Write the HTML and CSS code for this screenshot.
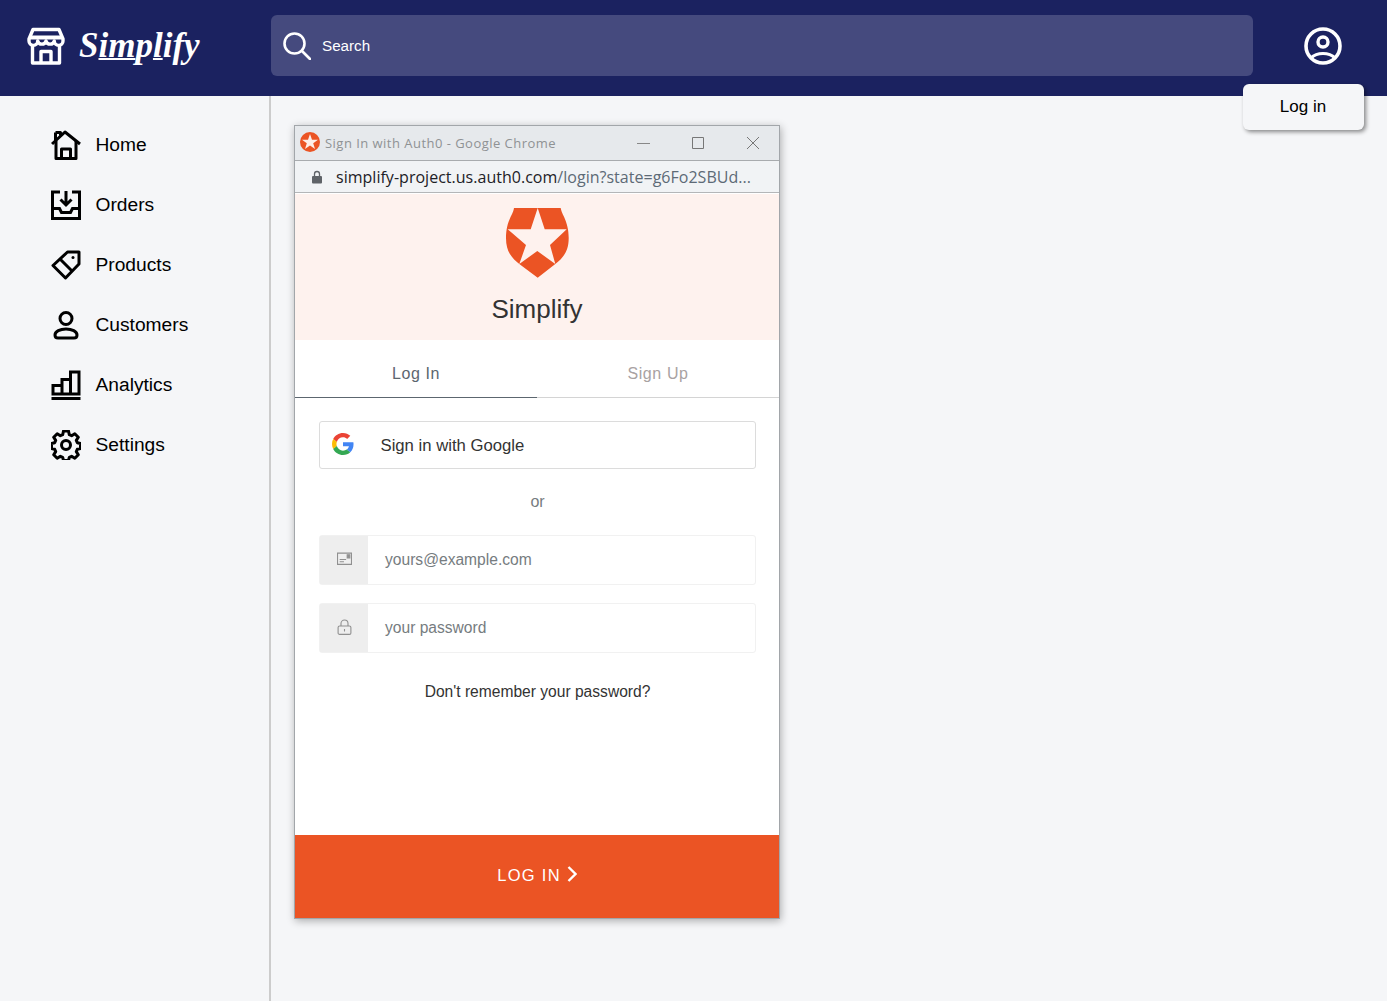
FILE: index.html
```html
<!DOCTYPE html>
<html>
<head>
  <title>Simplify</title>
  <link rel="stylesheet" href="styles.css">
</head>
<body>

  <!-- Header -->
  <header class="topbar">
    <div class="brand">
      <svg class="brand-icon" viewBox="0 0 38 38" fill="none" stroke="#fff" stroke-width="3.400" stroke-linejoin="round">
        <path d="M6 2.500h26l4 9.500v2a4.300 4.300 0 0 1-8.700 0 4.300 4.300 0 0 1-8.300 0 4.300 4.300 0 0 1-8.300 0 4.300 4.300 0 0 1-8.700 0v-2z"/>
        <path d="M2 10.500h34" stroke-width="4"/>
        <path d="M5.500 18v18h27V18"/>
        <path d="M14 36V24.500h10V36"/>
      </svg>
      <a href="#" class="brand-name">S<span class="brand-line">im</span>p<span class="brand-line">l</span>ify</a>
    </div>
    <div class="search">
      <svg class="search-icon" viewBox="0 0 28 28" fill="none" stroke="#fff" stroke-width="2.600" stroke-linecap="round">
        <circle cx="11.500" cy="11.500" r="10"/>
        <path d="M19 19l8 8"/>
      </svg>
      <span>Search</span>
    </div>
    <div class="account">
      <svg class="account-icon" viewBox="0 0 38 38" fill="none" stroke="#fff" stroke-width="3.600">
        <circle cx="19" cy="19" r="17"/>
        <circle cx="19" cy="15" r="5" stroke-width="3.400"/>
        <path d="M7 31c3-3 7-4.500 12-4.500s9 1.500 12 4.500" stroke-width="3.200"/>
      </svg>
    </div>
  </header>

  <button class="login-pop">Log in</button>

  <div class="page">
    <!-- Sidebar -->
    <nav class="sidebar">
      <a href="#" class="nav-item">
        <svg viewBox="0 0 30 30" fill="none" stroke="#000" stroke-width="3" stroke-linejoin="round">
          <path d="M1 14L14 2l15 12"/>
          <path d="M4.500 2.500h5v3"/>
          <path d="M4.500 2.500V11M5 11v17.500h20V11"/>
          <path d="M10.500 28.500V19h9v9.500"/>
        </svg>
        <span>Home</span>
      </a>
      <a href="#" class="nav-item">
        <svg viewBox="0 0 30 30" fill="none" stroke="#000" stroke-width="3" stroke-linejoin="miter">
          <path d="M9 2H1.500v26.500h27V2H21"/>
          <path d="M1.500 18.500h7l2 4h9l2-4h7"/>
          <path d="M15 1v13M9.500 9.500L15 15l5.500-5.500"/>
        </svg>
        <span>Orders</span>
      </a>
      <a href="#" class="nav-item">
        <svg viewBox="0 0 30 30" fill="none" stroke="#000" stroke-width="3" stroke-linejoin="round">
          <path d="M16.500 2H28v12L14.500 28 2 15.500z"/>
          <path d="M9 9l12.500 12.500"/>
          <circle cx="22" cy="7.500" r="1.500" fill="#000" stroke="none"/>
        </svg>
        <span>Products</span>
      </a>
      <a href="#" class="nav-item">
        <svg viewBox="0 0 30 30" fill="none" stroke="#000" stroke-width="3">
          <circle cx="15" cy="8.500" r="6"/>
          <path d="M4 25c0-3.500 5-6 11-6s11 2.500 11 6c0 2-1 3-3 3H7c-2 0-3-1-3-3z"/>
        </svg>
        <span>Customers</span>
      </a>
      <a href="#" class="nav-item">
        <svg viewBox="0 0 30 30" fill="none" stroke="#000" stroke-width="3">
          <path d="M2 24v-8.500h9V24zM11 24V9.500h8.500V24zM19.500 24V2H28v22z"/>
          <path d="M.500 28.500h29" stroke-width="3"/>
        </svg>
        <span>Analytics</span>
      </a>
      <a href="#" class="nav-item">
        <svg viewBox="0 0 30 30" fill="none" stroke="#000" stroke-width="3" stroke-linejoin="round">
          <path d="M12.500 1.500h5l.8 3.700 2.300 1 3.200-2 3.500 3.500-2 3.200 1 2.300 3.200.8v5l-3.200.8-1 2.300 2 3.200-3.500 3.500-3.200-2-2.300 1-.8 3.200h-5l-.8-3.200-2.300-1-3.200 2-3.500-3.500 2-3.200-1-2.300-3.200-.8v-5l3.200-.8 1-2.300-2-3.200 3.500-3.500 3.200 2 2.300-1z" transform="translate(0 -.500)"/>
          <circle cx="15" cy="15" r="4.500"/>
        </svg>
        <span>Settings</span>
      </a>
    </nav>

    <!-- Login window -->
    <main class="main">
      <div class="popup">
        <div class="title-bar">
          <svg class="favicon" viewBox="0 0 20 20">
            <circle cx="10" cy="10" r="10" fill="#eb5424"/>
            <path d="M10 2l2 5.700h6l-4.800 3.600 1.800 5.700L10 13.500 5 17l1.800-5.700L2 7.700h6z" fill="#fdeee8"/>
          </svg>
          <span class="title-text">Sign In with Auth0 - Google Chrome</span>
          <div class="win-btns">
            <svg viewBox="0 0 14 14" stroke="#888" fill="none"><path d="M1 7.500h13"/></svg>
            <svg viewBox="0 0 14 14" stroke="#777" fill="none"><path d="M1.500 1.500h11v11h-11z"/></svg>
            <svg viewBox="0 0 14 14" stroke="#777" fill="none"><path d="M1 1l12 12M13 1L1 13"/></svg>
          </div>
        </div>
        <div class="url-bar">
          <svg class="lock" viewBox="0 0 12 14">
            <path d="M3.500 6V4a2.500 2.500 0 0 1 5 0v2" fill="none" stroke="#5f6368" stroke-width="1.300"/>
            <rect x="1" y="6" width="10" height="7.500" rx="1" fill="#5f6368"/>
          </svg>
          <span class="url-text">simplify-project.us.auth0.com<span class="url-rest">/login?state=g6Fo2SBUd...</span></span>
        </div>

        <div class="auth-head">
          <svg class="auth-logo" viewBox="0 0 63 70">
            <path d="M8 0h46.700c1 7 8 13 8 30 0 14-6 20-13.400 26L31.700 69.700 13.300 56C6 50 0 44 0 30 0 13 7 7 8 0z" fill="#eb5424"/>
            <path d="M31.700 0l7 21.300h22L44 37l5.300 19-18-13-18 13L20 37 1.700 21.300h23z" fill="#fef2ee"/>
          </svg>
          <div class="auth-name">Simplify</div>
        </div>

        <div class="tabs">
          <a href="#" class="tab tab-active">Log In</a>
          <a href="#" class="tab">Sign Up</a>
        </div>

        <div class="auth-body">
          <a href="#" class="google-btn">
            <svg class="google-icon" viewBox="0 0 48 48">
              <path fill="#ea4335" d="M24 9.500c3.500 0 6.700 1.300 9.100 3.500l6.800-6.800C35.800 2.400 30.300 0 24 0 14.600 0 6.500 5.400 2.600 13.200l7.900 6.200C12.400 13.600 17.700 9.500 24 9.500z"/>
              <path fill="#4285f4" d="M47 24.500c0-1.600-.100-3.100-.400-4.500H24v9h12.900c-.600 3-2.300 5.500-4.800 7.200l7.700 6C44.300 38 47 31.800 47 24.500z"/>
              <path fill="#fbbc05" d="M10.500 28.600c-.500-1.400-.800-3-.800-4.600s.300-3.200.800-4.600l-7.900-6.200C.900 16.500 0 20.100 0 24s.900 7.500 2.600 10.800z"/>
              <path fill="#34a853" d="M24 48c6.500 0 11.900-2.100 15.800-5.800l-7.700-6c-2.100 1.400-4.900 2.300-8.100 2.300-6.300 0-11.600-4.200-13.500-9.900l-7.900 6.200C6.500 42.600 14.600 48 24 48z"/>
            </svg>
            <span class="google-text">Sign in with Google</span>
          </a>
          <div class="or">or</div>
          <div class="field">
            <div class="field-icon">
              <svg viewBox="0 0 14 12" fill="none" stroke="#909090">
                <path d="M.500.500h13v10.500H.500z" fill="#efefef"/>
                <path d="M2.500 6.500h6M2.500 8.500h4"/>
                <path d="M9.500 2h2.500v3H9.500z" fill="#909090"/>
              </svg>
            </div>
            <div class="field-text">yours@example.com</div>
          </div>
          <div class="field">
            <div class="field-icon">
              <svg viewBox="0 0 14 16" fill="none" stroke="#909090" stroke-width="1.100">
                <path d="M3.500 7V4.500a3.500 3.500 0 0 1 7 0V7"/>
                <rect x=".600" y="7" width="12.800" height="8.400" rx="1.500"/>
                <path d="M7 10v2.500"/>
              </svg>
            </div>
            <div class="field-text">your password</div>
          </div>
          <a href="#" class="forgot">Don't remember your password?</a>
        </div>

        <button class="submit">LOG IN
          <svg class="chevron" viewBox="0 0 10 16" fill="none" stroke="#fff" stroke-width="2.400"><path d="M1.500 1l7 7-7 7"/></svg>
        </button>
      </div>
    </main>
  </div>

</body>
</html>
```

FILE: styles.css
```css
body {
  margin: 0;
  padding: 0;
  font-family: "Liberation Sans", Arial, sans-serif;
  background-color: #f5f6f8;
  color: #000;
  min-height: 100vh;
}

a {
  text-decoration: none;
}

/* Header */
.topbar {
  display: flex;
  align-items: center;
  height: 96px;
  padding-bottom: 5px;
  background-color: #1b2260;
  box-sizing: border-box;
}

.brand {
  display: flex;
  align-items: center;
  width: 271px;
  padding-left: 27px;
  box-sizing: border-box;
  flex-shrink: 0;
}

.brand-icon {
  width: 38px;
  height: 38px;
}

.brand-name {
  font-family: "Liberation Serif", serif;
  font-style: italic;
  font-weight: bold;
  font-size: 35px;
  color: #fff;
  margin-left: 14px;
  line-height: 38px;
}

.brand-line {
  text-decoration: underline;
  text-decoration-thickness: 2px;
}

.search {
  display: flex;
  align-items: center;
  width: 982px;
  height: 61px;
  background-color: #454a7e;
  border-radius: 6px;
  color: #fff;
  font-size: 15.200px;
  box-sizing: border-box;
  padding-left: 12px;
  gap: 11px;
}

.search-icon {
  width: 28px;
  height: 28px;
}

.account {
  display: flex;
  flex: 1;
  justify-content: center;
  padding-left: 6px;
}

.account-icon {
  width: 38px;
  height: 38px;
}

.login-pop {
  position: absolute;
  left: 1243px;
  top: 84px;
  width: 121px;
  height: 46px;
  background-color: #f5f6f8;
  border: none;
  border-radius: 6px;
  box-shadow: 2px 2px 4px rgba(0, 0, 0, 0.45);
  font-family: "Liberation Sans", Arial, sans-serif;
  font-size: 17px;
  color: #000;
  padding: 0 1px 0 0;
  z-index: 10;
}

/* Sidebar */
.page {
  display: flex;
  min-height: 905px;
}

.sidebar {
  width: 271px;
  flex-shrink: 0;
  border-right: 2px solid #cccccc;
  box-sizing: border-box;
  padding-top: 19px;
  padding-left: 51px;
}

.nav-item {
  display: flex;
  align-items: center;
  height: 60px;
  color: #000;
  font-size: 19.200px;
  gap: 14.500px;
}

.nav-item svg {
  width: 30px;
  height: 30px;
}

/* Login window */
.main {
  padding: 29px 0 0 23px;
}

.popup {
  width: 486px;
  height: 794px;
  display: flex;
  flex-direction: column;
  box-sizing: border-box;
  border: 1px solid #a2a6aa;
  background-color: #fff;
  box-shadow: 1px 2px 8px rgba(0, 0, 0, 0.3);
}

.title-bar {
  display: flex;
  align-items: center;
  height: 35px;
  background-color: #e6e9ec;
  border-bottom: 1px solid #a8abae;
  box-sizing: border-box;
  padding-left: 5px;
}

.favicon {
  width: 20px;
  height: 20px;
  margin-top: -3px;
}

.title-text {
  font-family: "Open Sans", sans-serif;
  font-size: 13px;
  letter-spacing: 0.47px;
  color: #8f9294;
  margin-left: 5px;
  flex: 1;
}

.win-btns {
  display: flex;
  gap: 41px;
  padding-right: 19px;
}

.win-btns svg {
  width: 14px;
  height: 14px;
}

.url-bar {
  display: flex;
  align-items: center;
  height: 32px;
  background-color: #f1f3f5;
  border-bottom: 1px solid #b4b6b8;
  box-sizing: border-box;
  padding-left: 16px;
}

.lock {
  width: 12px;
  height: 14px;
}

.url-text {
  font-family: "Open Sans", sans-serif;
  font-size: 16px;
  letter-spacing: 0.02px;
  color: #1d2126;
  margin-left: 13px;
  white-space: nowrap;
}

.url-rest {
  color: #5d6a76;
}

.auth-head {
  height: 146px;
  margin-top: 1px;
  background-color: #fef2ee;
  box-sizing: border-box;
  padding-top: 14px;
  text-align: center;
}

.auth-logo {
  display: block;
  width: 63px;
  height: 70px;
  margin: 0 auto;
}

.auth-name {
  font-size: 26px;
  color: #333;
  margin-top: 15px;
  line-height: 32px;
}

.tabs {
  display: flex;
  height: 58px;
  border-bottom: 1px solid #d4d4d4;
  box-sizing: border-box;
}

.tab {
  width: 50%;
  display: flex;
  align-items: center;
  justify-content: center;
  padding-top: 10px;
  box-sizing: border-box;
  font-size: 16px;
  letter-spacing: 0.6px;
  color: #a8a2a2;
}

.tab-active {
  color: #5c666f;
  border-bottom: 1px solid #5c666f;
  height: 58px;
}

.auth-body {
  flex: 1;
  padding: 23px 23px 0 24px;
}

.google-btn {
  display: flex;
  align-items: center;
  height: 48px;
  border: 1px solid #dcdcdc;
  border-radius: 3px;
  box-sizing: border-box;
  color: #333;
  font-size: 16.700px;
  padding-left: 12px;
}

.google-text {
  padding-top: 2px;
}

.google-icon {
  width: 22px;
  height: 22px;
  margin-right: 26.500px;
  margin-top: -3px;
}

.or {
  text-align: center;
  color: #767c80;
  font-size: 16px;
  height: 18px;
  line-height: 18px;
  margin: 24px 0;
}

.field {
  display: flex;
  height: 50px;
  border: 1px solid #f1f1f1;
  border-radius: 3px;
  box-sizing: border-box;
  margin-bottom: 18px;
  background-color: #fff;
}

.field-icon {
  width: 48px;
  background-color: #eeeeee;
  display: flex;
  align-items: center;
  justify-content: center;
  flex-shrink: 0;
}

.field-icon svg {
  width: 15px;
  height: 16px;
  margin-top: -2px;
}

.field-text {
  color: #767c80;
  font-size: 15.600px;
  padding-left: 17px;
  line-height: 47px;
}

.forgot {
  display: block;
  text-align: center;
  color: #333;
  font-size: 15.600px;
  margin-top: 30px;
}

.submit {
  height: 83px;
  background-color: #eb5424;
  border: none;
  color: #fff;
  font-family: "Liberation Sans", Arial, sans-serif;
  font-size: 16.500px;
  letter-spacing: 1.300px;
  padding: 0 0 2px 0;
}

.chevron {
  width: 10px;
  height: 16px;
  vertical-align: -1px;
}
```
